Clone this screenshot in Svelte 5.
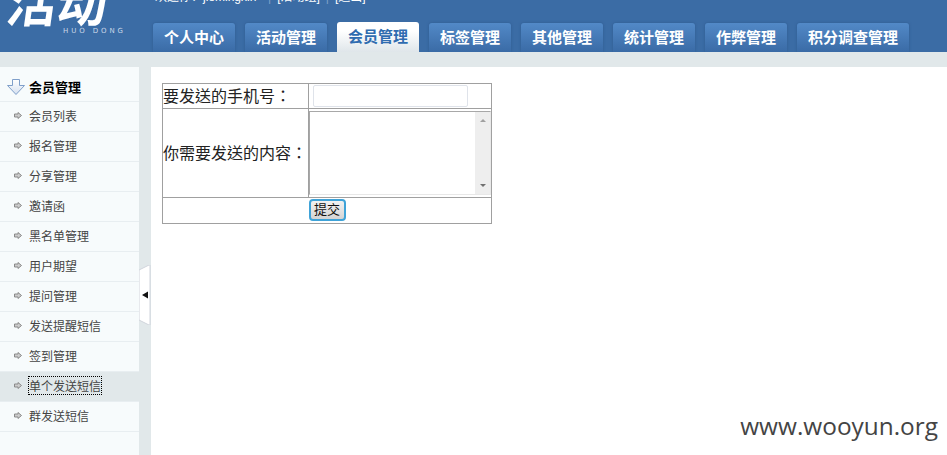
<script>
	const tabs = ['个人中心', '活动管理', '会员管理', '标签管理', '其他管理', '统计管理', '作弊管理', '积分调查管理'];
	const activeTab = '会员管理';
	const menu = ['会员列表', '报名管理', '分享管理', '邀请函', '黑名单管理', '用户期望', '提问管理', '发送提醒短信', '签到管理', '单个发送短信', '群发送短信'];
	const activeItem = '单个发送短信';
</script>

<div class="page">
	<header>
		<div class="logo">
			<span class="logo-cn">活动</span>
			<span class="logo-en">HUO DONG</span>
		</div>
		<div class="head-right">
			<div class="welcome">
				<span class="who">欢迎你：jiemingxin</span>
				<span class="sep">|</span>
				<span>[活动组]</span>
				<span class="sep">|</span>
				<span>[退出]</span>
			</div>
			<nav>
				{#each tabs as tab}
					<a class="tab" class:active={tab === activeTab} href="#top">{tab}</a>
				{/each}
			</nav>
		</div>
	</header>
	<div class="band"></div>
	<div class="main">
		<aside>
			<div class="menu-title">
				<svg width="18" height="16" viewBox="0 0 18 16">
					<defs>
						<linearGradient id="down" x1="0" y1="0" x2="0" y2="1">
							<stop offset="0" stop-color="#ffffff" />
							<stop offset="1" stop-color="#d5e0f0" />
						</linearGradient>
					</defs>
					<path d="M5.5 .5 H12.5 V6.5 H17.5 L9 15.5 L.5 6.5 H5.5 Z" fill="url(#down)" stroke="#7f9fca" />
				</svg>
				<b>会员管理</b>
			</div>
			{#each menu as item}
				<div class="menu-item" class:current={item === activeItem}>
					<svg width="8" height="7" viewBox="0 0 8 7">
						<path d="M.5 2 H4 V.5 L7.5 3.5 L4 6.5 V5 H.5 Z" fill="#cccccc" stroke="#8a8a8a" />
					</svg>
					<span>{item}</span>
				</div>
			{/each}
		</aside>
		<div class="gutter">
			<svg class="handle" width="12" height="60" viewBox="0 0 12 60">
				<path d="M0 5 L10 0 H11 V60 H10 L0 55 Z" fill="#ffffff" stroke="#d0d4dc" />
				<path d="M3 30 L9 26.5 V33.5 Z" fill="#111111" />
			</svg>
		</div>
		<main>
			<table>
				<colgroup>
					<col class="col-label" />
					<col />
				</colgroup>
				<tbody>
					<tr>
						<td class="label">要发送的手机号：</td>
						<td class="phone-cell"><input type="text" /></td>
					</tr>
					<tr>
						<td class="label">你需要发送的内容：</td>
						<td>
							<div class="textbox">
								<textarea></textarea>
								<div class="scroll">
									<i class="up"></i>
									<i class="down"></i>
								</div>
							</div>
						</td>
					</tr>
					<tr class="row-submit">
						<td colspan="2"><button>提交</button></td>
					</tr>
				</tbody>
			</table>
			<div class="mark">www.wooyun.org</div>
		</main>
	</div>
</div>

<style>
	:global(body) {
		margin: 0;
		font-family: "Liberation Sans", "Noto Sans CJK SC", sans-serif;
	}

	.page {
		height: 455px;
		overflow: hidden;
		display: flex;
		flex-direction: column;
		background: #e1e8ea;
	}

	header {
		height: 52px;
		flex: none;
		overflow: hidden;
		display: flex;
		background: #3b6ca5;
	}

	.logo {
		width: 153px;
		flex: none;
		display: flex;
		flex-direction: column;
		justify-content: flex-end;
		padding-bottom: 18px;
		box-sizing: border-box;
		color: #fff;
	}

	.logo-cn {
		height: 40px;
		margin: 0 0 8px 8px;
		font: 700 50px/40px "Noto Sans CJK SC", sans-serif;
		white-space: nowrap;
		transform: skewX(-8deg);
	}

	.logo-en {
		margin-left: 63px;
		font: 7px/6px "DejaVu Sans", sans-serif;
		letter-spacing: 2.9px;
		color: #c9d7e8;
		white-space: nowrap;
	}

	.head-right {
		flex: 1;
		display: flex;
		flex-direction: column;
		justify-content: flex-end;
	}

	.welcome {
		display: flex;
		gap: 6px;
		margin: 0 0 19px 2px;
		font-size: 12px;
		line-height: 14px;
		color: #fff;
		white-space: nowrap;
	}

	.who {
		width: 107px;
	}

	.sep {
		color: #7fa0c8;
	}

	nav {
		display: flex;
		gap: 10px;
		height: 29px;
		flex: none;
	}

	.tab {
		padding: 0 11px;
		border-radius: 3px 3px 0 0;
		background: linear-gradient(#5289c7, #3a6ba6);
		box-shadow: 0 0 3px #2f5b90;
		color: #fff;
		font: 700 15px/27px "Noto Sans CJK SC", sans-serif;
		text-decoration: none;
	}

	.tab.active {
		margin-top: -1px;
		background: linear-gradient(#ffffff 30%, #dfe6ea);
		box-shadow: none;
		color: #2f6cb0;
		line-height: 28px;
	}

	.band {
		height: 15px;
		flex: none;
	}

	.main {
		flex: 1;
		display: flex;
	}

	aside {
		width: 139px;
		flex: none;
		background: #f7fbfc;
	}

	.menu-title {
		height: 35px;
		box-sizing: border-box;
		padding: 5px 0 0 7px;
		display: flex;
		align-items: center;
		gap: 4px;
		border-bottom: 1px solid #e8eef1;
		font: 13px "Noto Sans CJK SC", sans-serif;
		color: #000;
	}

	.menu-item {
		height: 30px;
		box-sizing: border-box;
		padding: 0 0 3px 14px;
		display: flex;
		align-items: center;
		gap: 7px;
		border-bottom: 1px solid #e8eef1;
		font: 12px "Noto Sans CJK SC", sans-serif;
		color: #444;
	}

	.menu-item.current {
		background: #e1e8ea;
	}

	.menu-item.current span {
		outline: 1px dotted #000;
	}

	.gutter {
		width: 12px;
		flex: none;
		position: relative;
	}

	.handle {
		position: absolute;
		left: 0;
		top: 198px;
	}

	main {
		flex: 1;
		position: relative;
		background: #fff;
		padding: 16px 0 0 11px;
	}

	table {
		width: 330px;
		table-layout: fixed;
		border-collapse: collapse;
		border: 1px solid #a0a0a0;
		font: 16px/18px "Noto Sans CJK TC", sans-serif;
		color: #222;
	}

	.col-label {
		width: 146px;
	}

	td {
		border: 1px solid #a0a0a0;
		padding: 0;
	}

	.label {
		white-space: nowrap;
		padding-bottom: 2px;
	}

	.phone-cell {
		padding: 1px 0;
	}

	input {
		display: block;
		width: 155px;
		height: 22px;
		margin: 0 0 0 4px;
		padding: 0;
		box-sizing: border-box;
		border: 1px solid #dfe3ea;
		border-radius: 2px;
		background: #fff;
	}

	.textbox {
		display: flex;
		height: 84px;
		margin: 2px 0;
		box-sizing: border-box;
		border-top: 1px solid #a8a8a8;
		border-left: 1px solid #a8a8a8;
		border-right: 1px solid #e8e8e8;
		border-bottom: 1px solid #e8e8e8;
	}

	textarea {
		flex: 1;
		width: 0;
		min-width: 0;
		padding: 0;
		border: 0;
		outline: 0;
		resize: none;
		background: #fff;
	}

	.scroll {
		width: 15px;
		flex: none;
		display: flex;
		flex-direction: column;
		justify-content: space-between;
		align-items: center;
		padding: 7px 0;
		box-sizing: border-box;
		background: #eeeeee;
	}

	.scroll i {
		width: 0;
		height: 0;
		border-left: 3px solid transparent;
		border-right: 3px solid transparent;
	}

	.scroll .up {
		border-bottom: 3px solid #a0a0a0;
	}

	.scroll .down {
		border-top: 3px solid #707070;
	}

	.row-submit td {
		height: 24px;
		padding: 0 0 1px;
		text-align: center;
		line-height: 0;
		vertical-align: top;
	}

	button {
		display: inline-block;
		vertical-align: top;
		width: 37px;
		height: 22px;
		margin-top: 1px;
		padding: 0 0 3px;
		box-sizing: border-box;
		border: 2px solid #3fa3d8;
		border-radius: 4px;
		background: linear-gradient(#f2f2f2, #d4d4d4);
		font: 13px/16px "Noto Sans CJK SC", sans-serif;
		color: #111;
	}

	.mark {
		position: absolute;
		right: 9px;
		bottom: 14px;
		font: 24.4px/30px "Open Sans", sans-serif;
		color: #444;
	}
</style>
